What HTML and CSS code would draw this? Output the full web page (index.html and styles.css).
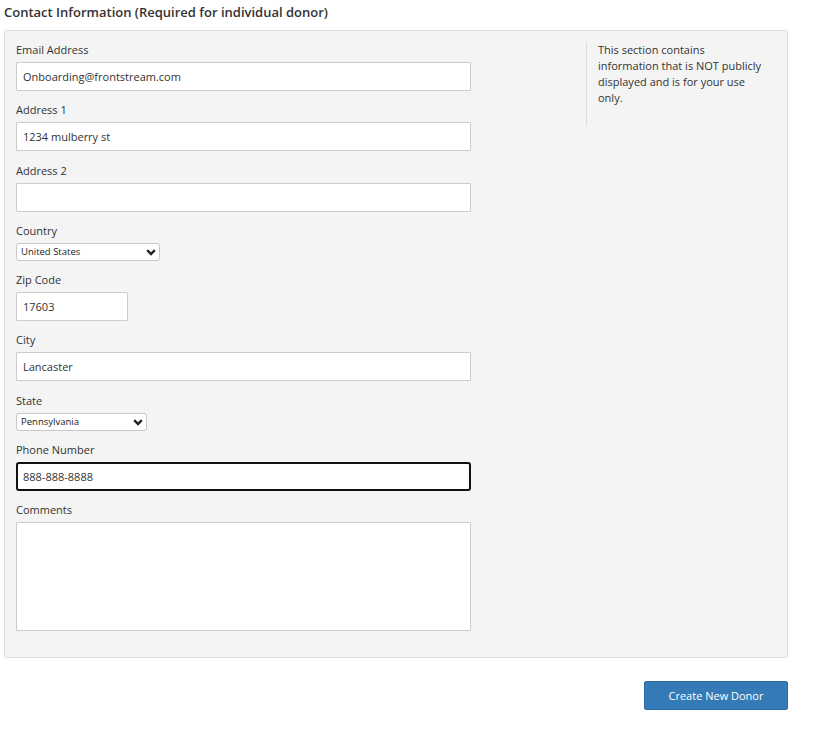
FILE: index.html
```html
<!DOCTYPE html>
<html lang="en">
  <head>
    <meta charset="UTF-8" />
    <title>Contact Information</title>
    <link rel="stylesheet" href="styles.css">
  </head>
  <body>
    <div class="page">
      <h2 class="section-title">Contact Information (Required for individual donor)</h2>

      <div class="panel">
        <div class="form-col">
          <div class="form-group">
            <label for="email">Email Address</label>
            <input type="text" id="email" class="field" value="Onboarding@frontstream.com" />
          </div>
          <div class="form-group">
            <label for="addr1">Address 1</label>
            <input type="text" id="addr1" class="field" value="1234 mulberry st" />
          </div>
          <div class="form-group">
            <label for="addr2">Address 2</label>
            <input type="text" id="addr2" class="field" value="" />
          </div>
          <div class="form-group">
            <label for="country">Country</label>
            <div class="select-wrap country">
              <select id="country" class="dropdown">
                <option>United States</option>
              </select>
              <svg class="chevron" viewBox="0 0 10 7" width="10" height="7">
                <path d="M1.2 1.2 L5 5 L8.8 1.2" fill="none" stroke="#222" stroke-width="2.4" />
              </svg>
            </div>
          </div>
          <div class="form-group">
            <label for="zip">Zip Code</label>
            <input type="text" id="zip" class="field zip" value="17603" />
          </div>
          <div class="form-group">
            <label for="city">City</label>
            <input type="text" id="city" class="field" value="Lancaster" />
          </div>
          <div class="form-group">
            <label for="state">State</label>
            <div class="select-wrap state">
              <select id="state" class="dropdown">
                <option>Pennsylvania</option>
              </select>
              <svg class="chevron" viewBox="0 0 10 7" width="10" height="7">
                <path d="M1.2 1.2 L5 5 L8.8 1.2" fill="none" stroke="#222" stroke-width="2.4" />
              </svg>
            </div>
          </div>
          <div class="form-group">
            <label for="phone">Phone Number</label>
            <input type="text" id="phone" class="field focused" value="888-888-8888" />
          </div>
          <div class="form-group">
            <label for="comments">Comments</label>
            <textarea id="comments" class="field comments"></textarea>
          </div>
        </div>

        <div class="side-note">
          This section contains information that is NOT publicly displayed and is for your use only.
        </div>
      </div>

      <div class="actions">
        <button class="btn-primary">Create New Donor</button>
      </div>
    </div>
  </body>
</html>
```

FILE: styles.css
```css
body {
  margin: 0;
  font-family: "Open Sans", "Liberation Sans", sans-serif;
  color: #333;
  background: #fff;
}

.page {
  width: 784px;
  margin-left: 4px;
}

.section-title {
  font-size: 13px;
  font-weight: 600;
  line-height: 20px;
  margin: 2px 0 8px;
  color: #333;
}

.panel {
  display: flex;
  justify-content: space-between;
  background-color: #f4f4f4;
  border: 1px solid #ddd;
  border-radius: 2px;
  padding: 10px 11px 16px;
}

.form-col {
  width: 455px;
}

.form-group {
  margin-bottom: 10.25px;
}

.form-group label {
  display: block;
  font-size: 11px;
  line-height: 18px;
  margin-bottom: 3px;
  color: #333;
}

.field {
  display: block;
  box-sizing: border-box;
  width: 455px;
  height: 29px;
  padding: 0 6px;
  font-family: inherit;
  font-size: 11px;
  color: #333;
  background: #fff;
  border: 1px solid #ccc;
  border-radius: 1px;
}

.field.zip {
  width: 112px;
}

.field.focused {
  border: 2px solid #111;
  border-radius: 3px;
  padding-left: 5px;
  outline: none;
}

.field.comments {
  height: 109px;
  resize: none;
}

.select-wrap {
  position: relative;
  height: 18px;
}

.select-wrap.country {
  width: 144px;
}

.select-wrap.state {
  width: 131px;
}

.dropdown {
  display: block;
  appearance: none;
  box-sizing: border-box;
  width: 100%;
  height: 18px;
  padding: 0 4px;
  font-family: inherit;
  font-size: 9.5px;
  color: #222;
  background: #fff;
  border: 1px solid #c8c8c8;
  border-radius: 3px;
}

.chevron {
  position: absolute;
  right: 4px;
  top: 6px;
  pointer-events: none;
}

.side-note {
  width: 168px;
  margin: 1px 10px 0 0;
  padding: 0 0 20px 11px;
  border-left: 1px solid #ddd;
  font-size: 11px;
  line-height: 16px;
  color: #333;
  align-self: flex-start;
}

.actions {
  display: flex;
  justify-content: flex-end;
  margin-top: 23px;
}

.btn-primary {
  width: 144px;
  height: 29px;
  font-family: inherit;
  font-size: 11px;
  color: #fff;
  background-color: #337ab7;
  border: 1px solid #2e6da4;
  border-radius: 2px;
  cursor: pointer;
}
```
